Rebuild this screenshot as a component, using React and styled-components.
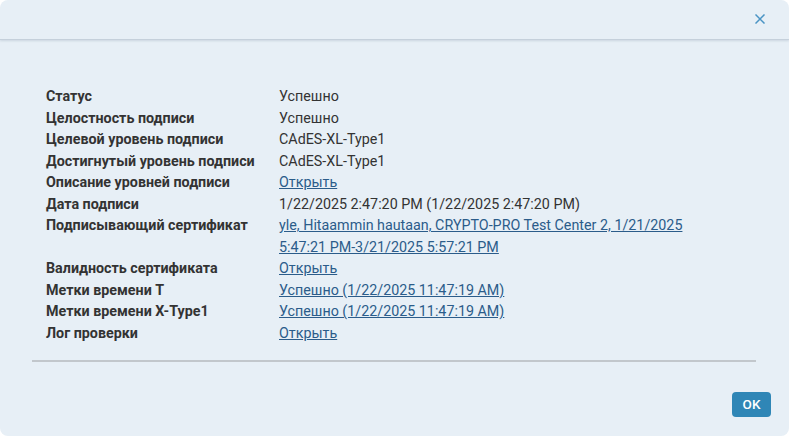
import React from "react"
import styled, { createGlobalStyle } from "styled-components"

const GlobalStyle = createGlobalStyle`
  html, body {
    margin: 0;
    padding: 0;
    background: #ffffff;
  }
  body {
    font-family: Roboto, "Liberation Sans", Arial, sans-serif;
  }
`

const Dialog = styled.div`
  width: 789px;
  height: 436px;
  box-sizing: border-box;
  background: #e7eff6;
  border-radius: 8px;
  display: flex;
  flex-direction: column;
  overflow: hidden;
`

const Header = styled.div`
  height: 39px;
  flex: 0 0 39px;
  display: flex;
  align-items: center;
  justify-content: flex-end;
  padding-right: 22px;
  border-bottom: 1px solid #c5d0db;
  box-shadow: 0 1px 2px rgba(120, 140, 160, 0.25);
`

const CloseButton = styled.button`
  border: 0;
  background: none;
  padding: 0;
  width: 14px;
  height: 14px;
  display: flex;
  align-items: center;
  justify-content: center;
  cursor: pointer;
  margin-top: -2px;
`

const Body = styled.div`
  display: flex;
  flex-direction: column;
  padding: 46px 33px 0 32px;
`

const InfoGrid = styled.div`
  display: grid;
  grid-template-columns: 233px 1fr;
  padding-left: 14px;
  font-size: 14.3px;
  line-height: 21.55px;
  color: #333333;
`

const Label = styled.div`
  font-weight: 700;
  color: #333333;
`

const Value = styled.div`
  color: #333333;
  padding-right: 40px;
`

const Link = styled.a`
  color: #2b5c8a;
  text-decoration: underline;
  cursor: pointer;
`

const Divider = styled.hr`
  border: 0;
  border-top: 2px solid #c2c7cc;
  margin: 15px 0 0 0;
`

const Footer = styled.div`
  display: flex;
  justify-content: flex-end;
  padding: 30px 18px 0 0;
`

const OkButton = styled.button`
  width: 39px;
  height: 25px;
  border: 0;
  border-radius: 4px;
  background: #2f86b6;
  color: #ffffff;
  font-family: Roboto, "Liberation Sans", Arial, sans-serif;
  font-size: 13.5px;
  font-weight: 500;
  cursor: pointer;
`

const rows = [
  { label: "Статус", value: "Успешно" },
  { label: "Целостность подписи", value: "Успешно" },
  { label: "Целевой уровень подписи", value: "CAdES-XL-Type1" },
  { label: "Достигнутый уровень подписи", value: "CAdES-XL-Type1" },
  { label: "Описание уровней подписи", value: "Открыть", link: true },
  { label: "Дата подписи", value: "1/22/2025 2:47:20 PM (1/22/2025 2:47:20 PM)" },
  {
    label: "Подписывающий сертификат",
    value: "yle, Hitaammin hautaan, CRYPTO-PRO Test Center 2, 1/21/2025 5:47:21 PM-3/21/2025 5:57:21 PM",
    link: true,
  },
  { label: "Валидность сертификата", value: "Открыть", link: true },
  { label: "Метки времени T", value: "Успешно (1/22/2025 11:47:19 AM)", link: true },
  { label: "Метки времени X-Type1", value: "Успешно (1/22/2025 11:47:19 AM)", link: true },
  { label: "Лог проверки", value: "Открыть", link: true },
]

const App = () => {
  return (
    <>
      <GlobalStyle />
      <Dialog>
        <Header>
          <CloseButton aria-label="Закрыть">
            <svg width="10" height="10" viewBox="0 0 10 10">
              <path d="M1 1L9 9M9 1L1 9" stroke="#4a94c4" strokeWidth="1.5" strokeLinecap="square" />
            </svg>
          </CloseButton>
        </Header>
        <Body>
          <InfoGrid>
            {rows.map((row, index) => (
              <React.Fragment key={index}>
                <Label>{row.label}</Label>
                <Value>{row.link ? <Link>{row.value}</Link> : row.value}</Value>
              </React.Fragment>
            ))}
          </InfoGrid>
          <Divider />
        </Body>
        <Footer>
          <OkButton>OK</OkButton>
        </Footer>
      </Dialog>
    </>
  )
}

export default App
